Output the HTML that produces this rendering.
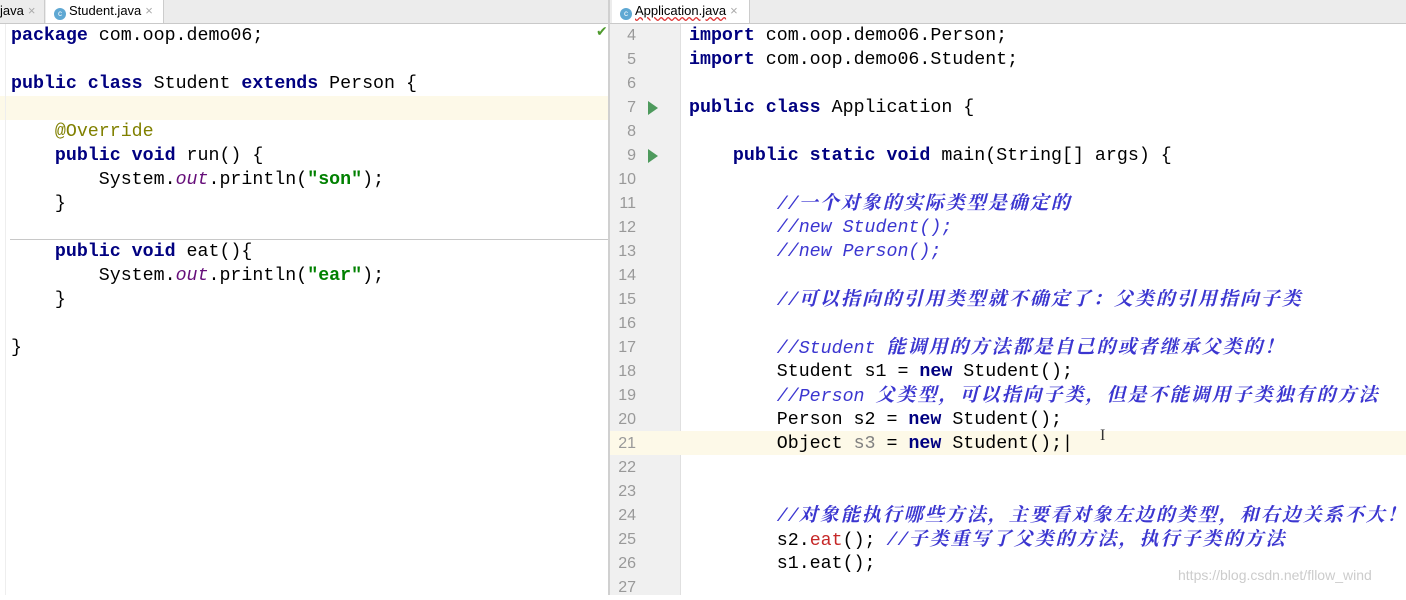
<!DOCTYPE html>
<html><head><meta charset="utf-8"><style>
body{margin:0;width:1406px;height:595px;overflow:hidden;background:#fff;position:relative;font-family:"Liberation Mono","Noto Sans CJK SC",monospace;}
.tabs{position:absolute;left:0;top:0;width:1406px;height:23px;background:#ececec;border-bottom:1px solid #c9c9c9;font-family:"Liberation Sans",sans-serif;font-size:13px;}
.tab{position:absolute;top:0;height:23px;line-height:22px;color:#000;}
.tab.act{background:#fff;}
.ic{display:inline-block;width:12px;height:12px;border-radius:50%;background:#5fa8d3;color:#fff;font-size:8px;line-height:12px;text-align:center;vertical-align:-1px;margin-right:3px}
.x{color:#aaa;margin-left:4px}
.l{position:absolute;height:24px;line-height:24px;font-size:18.3px;white-space:pre;color:#000;}
.k{color:#000080;font-weight:bold}
.s{color:#008000;font-weight:bold}
.o{color:#660e7a;font-style:italic}
.a{color:#808000}
.c{color:#3b36d0;font-style:italic;font-family:"Liberation Mono","Noto Serif CJK SC",monospace}
.z{font-size:19px;letter-spacing:2px;font-weight:bold}
.g{color:#808080}
.r{color:#c62828}
.n{position:absolute;left:610px;width:26px;text-align:right;font-size:16px;color:#999;height:24px;line-height:24px;font-family:"Liberation Sans",sans-serif}
.run{position:absolute;left:648px;width:0;height:0;border-left:10px solid #4e9a5d;border-top:7px solid transparent;border-bottom:7px solid transparent}
</style></head><body>
<div class="tabs">
<div class="tab" style="left:0;width:44px;border-right:1px solid #ccc">java<span class="x">×</span></div>
<div class="tab act" style="left:46px;width:118px;padding-left:8px;box-sizing:border-box;border-right:1px solid #ccc"><span class="ic">c</span>Student.java<span class="x">×</span></div>
<div class="tab act" style="left:612px;width:138px;padding-left:8px;box-sizing:border-box;border-right:1px solid #ccc"><span class="ic">c</span><span style="text-decoration:underline wavy #d33">Application.java</span><span class="x">×</span></div>
</div>
<div style="position:absolute;left:0;top:96px;width:608px;height:24px;background:#fdf9e8"></div>
<div style="position:absolute;left:10px;top:239px;width:598px;height:1px;background:#c8c8c8"></div>
<div style="position:absolute;left:5px;top:24px;width:1px;height:571px;background:#eee"></div>
<div style="position:absolute;left:596px;top:24px;color:#4e9a2d;font-size:14px;font-family:'DejaVu Sans'">✔</div>
<div style="position:absolute;left:608px;top:0;width:2px;height:595px;background:#d0d0d0"></div>
<div class="l" style="left:11px;top:24px"><span class="k">package</span> com.oop.demo06;</div>
<div class="l" style="left:11px;top:72px"><span class="k">public class</span> Student <span class="k">extends</span> Person {</div>
<div class="l" style="left:11px;top:120px">    <span class="a">@Override</span></div>
<div class="l" style="left:11px;top:144px">    <span class="k">public void</span> run() {</div>
<div class="l" style="left:11px;top:168px">        System.<span class="o">out</span>.println(<span class="s">"son"</span>);</div>
<div class="l" style="left:11px;top:192px">    }</div>
<div class="l" style="left:11px;top:240px">    <span class="k">public void</span> eat(){</div>
<div class="l" style="left:11px;top:264px">        System.<span class="o">out</span>.println(<span class="s">"ear"</span>);</div>
<div class="l" style="left:11px;top:288px">    }</div>
<div class="l" style="left:11px;top:336px">}</div>
<div style="position:absolute;left:610px;top:24px;width:70px;height:571px;background:#f0f0f0"></div>
<div style="position:absolute;left:680px;top:24px;width:1px;height:571px;background:#e0e0e0"></div>
<div style="position:absolute;left:610px;top:431px;width:796px;height:24px;background:#fdf9e8"></div>
<div class="n" style="top:24px">4</div><div class="n" style="top:48px">5</div><div class="n" style="top:72px">6</div><div class="n" style="top:96px">7</div><div class="n" style="top:120px">8</div><div class="n" style="top:144px">9</div><div class="n" style="top:168px">10</div><div class="n" style="top:192px">11</div><div class="n" style="top:216px">12</div><div class="n" style="top:240px">13</div><div class="n" style="top:264px">14</div><div class="n" style="top:288px">15</div><div class="n" style="top:312px">16</div><div class="n" style="top:336px">17</div><div class="n" style="top:360px">18</div><div class="n" style="top:384px">19</div><div class="n" style="top:408px">20</div><div class="n" style="top:432px">21</div><div class="n" style="top:456px">22</div><div class="n" style="top:480px">23</div><div class="n" style="top:504px">24</div><div class="n" style="top:528px">25</div><div class="n" style="top:552px">26</div><div class="n" style="top:576px">27</div>
<div class="run" style="top:101px"></div><div class="run" style="top:149px"></div>
<div class="l" style="left:689px;top:24px"><span class="k">import</span> com.oop.demo06.Person;</div>
<div class="l" style="left:689px;top:48px"><span class="k">import</span> com.oop.demo06.Student;</div>
<div class="l" style="left:689px;top:96px"><span class="k">public class</span> Application {</div>
<div class="l" style="left:689px;top:144px">    <span class="k">public static void</span> main(String[] args) {</div>
<div class="l" style="left:689px;top:192px">        <span class="c">//<span class="z">一个对象的实际类型是确定的</span></span></div>
<div class="l" style="left:689px;top:216px">        <span class="c">//new Student();</span></div>
<div class="l" style="left:689px;top:240px">        <span class="c">//new Person();</span></div>
<div class="l" style="left:689px;top:288px">        <span class="c">//<span class="z">可以指向的引用类型就不确定了：父类的引用指向子类</span></span></div>
<div class="l" style="left:689px;top:336px">        <span class="c">//Student <span class="z">能调用的方法都是自己的或者继承父类的！</span></span></div>
<div class="l" style="left:689px;top:360px">        Student s1 = <span class="k">new</span> Student();</div>
<div class="l" style="left:689px;top:384px">        <span class="c">//Person <span class="z">父类型，可以指向子类，但是不能调用子类独有的方法</span></span></div>
<div class="l" style="left:689px;top:408px">        Person s2 = <span class="k">new</span> Student();</div>
<div class="l" style="left:689px;top:432px">        Object <span class="g">s3</span> = <span class="k">new</span> Student();|</div>
<div class="l" style="left:689px;top:504px">        <span class="c">//<span class="z">对象能执行哪些方法，主要看对象左边的类型，和右边关系不大！</span></span></div>
<div class="l" style="left:689px;top:528px">        s2.<span class="r">eat</span>(); <span class="c">//<span class="z">子类重写了父类的方法，执行子类的方法</span></span></div>
<div class="l" style="left:689px;top:552px">        s1.eat();</div>
<div style="position:absolute;left:1100px;top:427px;font-size:16px;color:#333;font-family:'Liberation Serif'">I</div>
<div style="position:absolute;left:1178px;top:567px;font-size:14px;color:#ccc;font-family:'Liberation Sans',sans-serif">https://blog.csdn.net/fllow_wind</div>
</body></html>
